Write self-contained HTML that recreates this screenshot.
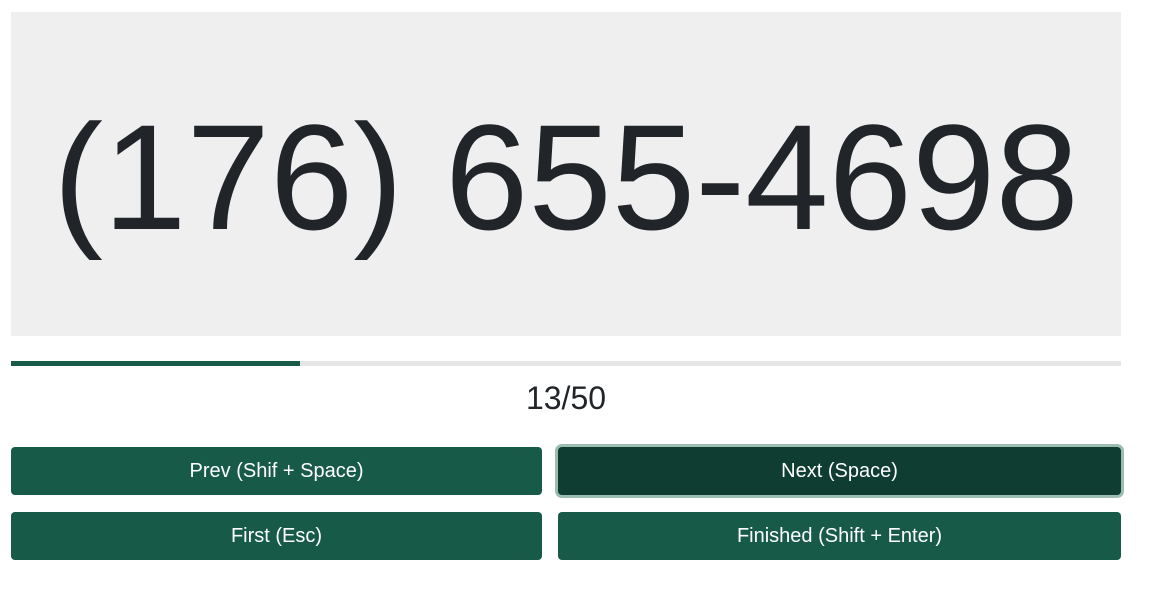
<!DOCTYPE html>
<html><head><style>
body{margin:0;background:#fff;font-family:"Liberation Sans",Arial,sans-serif;}
.box{position:absolute;left:11px;top:12px;width:1110px;height:324px;background:#efefef;}
.num{position:absolute;left:11px;width:1110px;top:87px;text-align:center;font-size:150px;line-height:180px;color:#212529;white-space:nowrap;}
.bar{position:absolute;left:11px;top:361px;width:1110px;height:5px;background:#e6e6e6;}
.fill{width:289px;height:5px;background:#175a48;}
.cnt{position:absolute;left:11px;width:1110px;top:380px;text-align:center;font-size:32px;line-height:36px;color:#212529;}
.btn{position:absolute;height:48px;background:#175a48;color:#fff;border-radius:4px;font-size:20px;line-height:48px;text-align:center;}
.act{background:#0f3d31;box-shadow:0 0 0 3px #9dbcb2;}
</style></head><body>
<div class="box"></div>
<div class="num">(176) 655-4698</div>
<div class="bar"><div class="fill"></div></div>
<div class="cnt">13/50</div>
<div class="btn" style="left:11px;top:447px;width:531px;">Prev (Shif + Space)</div>
<div class="btn act" style="left:558px;top:447px;width:563px;">Next (Space)</div>
<div class="btn" style="left:11px;top:512px;width:531px;">First (Esc)</div>
<div class="btn" style="left:558px;top:512px;width:563px;">Finished (Shift + Enter)</div>
</body></html>
